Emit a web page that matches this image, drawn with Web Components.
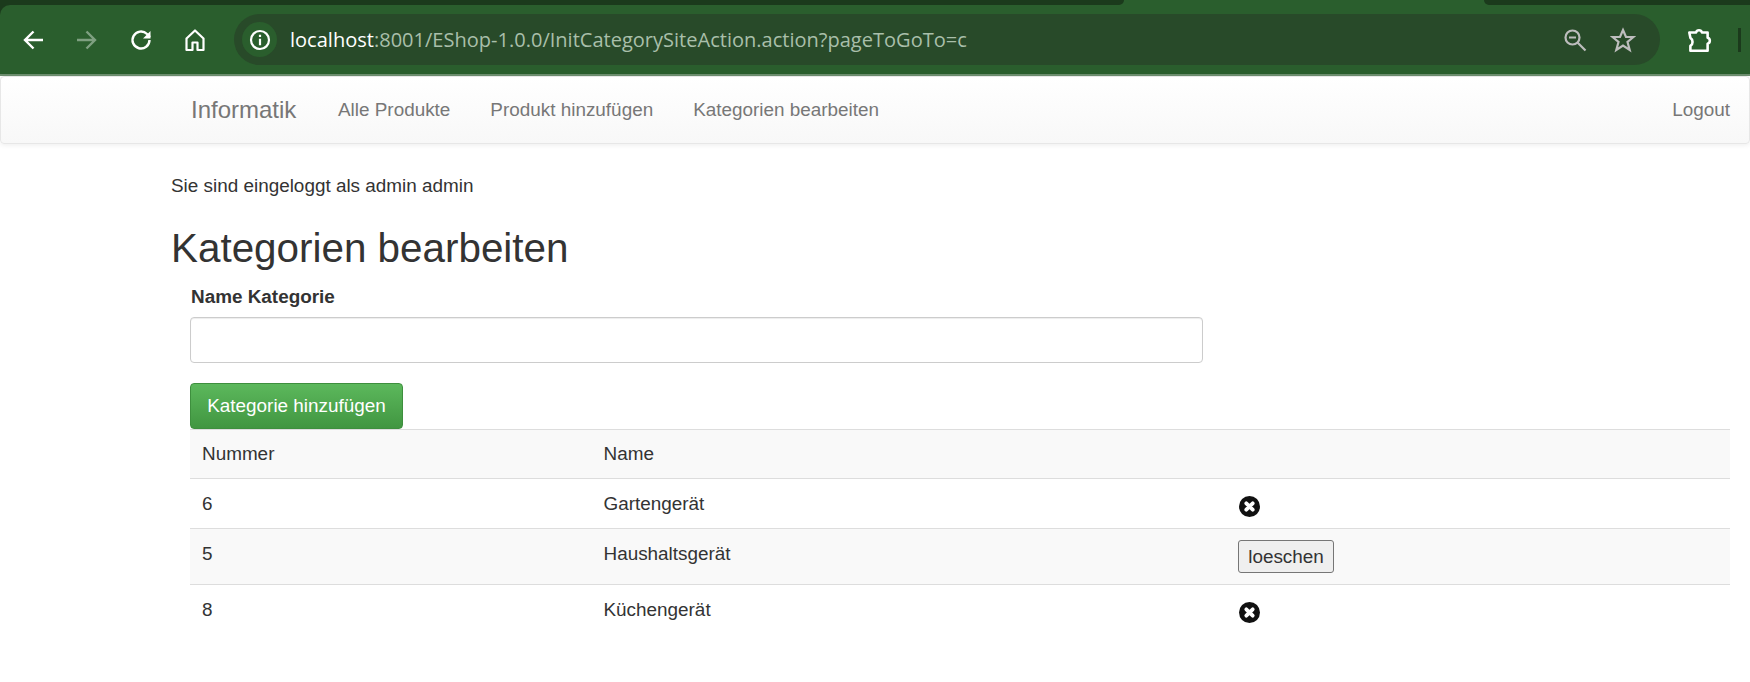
<!DOCTYPE html>
<html>
<head>
<meta charset="utf-8">
<title>Kategorien bearbeiten</title>
<style>
  html, body { margin: 0; padding: 0; background: #fff; }
  body { width: 1750px; height: 682px; overflow: hidden; font-family: "Liberation Sans", Arial, sans-serif; font-size: 18.9px; color: #333; }
</style>
</head>
<body>
<browser-bar url-host="localhost" url-rest=":8001/EShop-1.0.0/InitCategorySiteAction.action?pageToGoTo=c"></browser-bar>
<shop-nav></shop-nav>
<main-area>
  <login-note>Sie sind eingeloggt als admin admin</login-note>
  <page-title>Kategorien bearbeiten</page-title>
  <category-form></category-form>
  <category-table></category-table>
</main-area>

<script>
class BrowserBar extends HTMLElement {
  constructor() {
    super();
    this.attachShadow({ mode: 'open' });
  }
  connectedCallback() {
    const host = this.getAttribute('url-host');
    const rest = this.getAttribute('url-rest');
    this.shadowRoot.innerHTML = `
      <style>
        :host { display: block; height: 76px; background: #1b3a1c; }
        .strip { height: 5px; display: flex; background: #2a5e2d; }
        .strip div { background: #1b3a1c; }
        .strip .left { width: 1124px; border-radius: 0 0 5px 0; }
        .strip .right { margin-left: 360px; flex: 1; border-radius: 0 0 0 5px; }
        .bar { height: 71px; box-sizing: border-box; background: #2a5e2d; border-radius: 10px 0 0 0; display: flex; align-items: center; border-bottom: 2px solid #6e8f70; }
        .btn { width: 54px; height: 32px; display: flex; align-items: center; justify-content: center; flex: none; }
        .nav { display: flex; padding-left: 6px; margin-right: 12px; }
        svg { display: block; flex: none; }
        .omni { width: 1426px; height: 51px; flex: none; border-radius: 26px; background: #284a29; display: flex; align-items: center; box-sizing: border-box; padding: 0 24px 0 8px; }
        .info { width: 35px; height: 35px; border-radius: 18px; background: #2a5e2d; display: flex; align-items: center; justify-content: center; margin-right: 13px; flex: none; }
        .url { flex: 1; color: #a9bfaa; white-space: nowrap; font: 20.05px "Open Sans", sans-serif; }
        .url b { font-weight: 400; color: #fff; }
        .tail { display: flex; align-items: center; gap: 22px; }
        .ext { margin-left: 25px; }
        .sep { width: 3px; height: 24px; background: #1b3a1c; margin-left: 25px; }
      </style>
      <div class="strip"><div class="left"></div><div class="right"></div></div>
      <div class="bar">
        <div class="nav">
          <div class="btn"><svg width="24" height="24" viewBox="0 0 24 24" fill="none" stroke="#fff" stroke-width="2.4"><path d="M22 12H4.500M12.500 3.500L4 12l8.500 8.500"/></svg></div>
          <div class="btn"><svg width="24" height="24" viewBox="0 0 24 24" fill="none" stroke="#7fa081" stroke-width="2.4"><path d="M2 12h17.500M11.500 3.500L20 12l-8.500 8.500"/></svg></div>
          <div class="btn"><svg width="24" height="24" viewBox="0 0 24 24" fill="none" stroke="#fff" stroke-width="2.4"><path d="M20.500 12a8.500 8.500 0 1 1-2.500-6L21 9"/><path d="M21.500 3v7.500H14z" fill="#fff" stroke="none"/></svg></div>
          <div class="btn"><svg width="24" height="24" viewBox="0 0 24 24" fill="none" stroke="#fff" stroke-width="2.200"><path d="M3.500 10.500L12 2.500l8.500 8V22h-6v-7.500h-5V22h-6z" stroke-linejoin="round"/></svg></div>
        </div>
        <div class="omni">
          <div class="info"><svg width="24" height="24" viewBox="0 0 24 24"><circle cx="12" cy="12" r="9" fill="none" stroke="#fff" stroke-width="2.200"/><path d="M10.900 10.800h2.200v6.400h-2.200zM10.900 6.800h2.200v2.200h-2.200z" fill="#fff"/></svg></div>
          <div class="url"><b>${host}</b>${rest}</div>
          <div class="tail">
            <svg width="26" height="26" viewBox="0 0 26 26" fill="none" stroke="#bdbdbd" stroke-width="2.200"><circle cx="10.500" cy="10.500" r="7"/><path d="M7 10.500h7M15.500 15.500l8 8"/></svg>
            <svg width="26" height="26" viewBox="0 0 26 26" fill="none" stroke="#bdbdbd" stroke-width="2.200"><path d="M13 3l3 7h7.500l-6 5 2.200 8L13 18.600 6.300 23l2.200-8-6-5H10z"/></svg>
          </div>
        </div>
        <div class="ext"><svg width="28" height="28" viewBox="0 0 26 26" fill="none" stroke="#fff" stroke-width="2.400" stroke-linejoin="round"><path d="M4 6h6.300a2.800 2.800 0 0 1 5.400 0H21v5a2.800 2.800 0 0 1 0 5.400V23H5v-4.500a4.500 4.500 0 0 0 0-7.500z"/></svg></div>
        <div class="sep"></div>
      </div>
    `;
  }
}
customElements.define('browser-bar', BrowserBar);

class ShopNav extends HTMLElement {
  constructor() {
    super();
    this.attachShadow({ mode: 'open' });
  }
  connectedCallback() {
    this.shadowRoot.innerHTML = `
      <style>
        :host { display: block; height: 68px; box-sizing: border-box; background: linear-gradient(to bottom, #fff 0, #f8f8f8 100%); border: 1px solid #e7e7e7; border-radius: 4px; box-shadow: 0 1px 5px rgba(0,0,0,.075); font-size: 18.9px; color: #777; }
        nav { display: flex; align-items: center; height: 66px; padding: 0 19px 0 190px; }
        .brand { font-size: 24px; width: 107px; margin-right: 40px; white-space: nowrap; }
        a { margin-right: 40px; white-space: nowrap; }
        .logout { margin: 0 0 0 auto; }
      </style>
      <nav>
        <span class="brand">Informatik</span>
        <a>Alle Produkte</a>
        <a>Produkt hinzufügen</a>
        <a>Kategorien bearbeiten</a>
        <a class="logout">Logout</a>
      </nav>
    `;
  }
}
customElements.define('shop-nav', ShopNav);

class MainArea extends HTMLElement {
  constructor() {
    super();
    this.attachShadow({ mode: 'open' });
    this.shadowRoot.innerHTML = `
      <style>
        :host { display: block; padding: 30px 20px 0 171px; }
      </style>
      <slot></slot>
    `;
  }
}
customElements.define('main-area', MainArea);

class LoginNote extends HTMLElement {
  constructor() {
    super();
    this.attachShadow({ mode: 'open' });
    this.shadowRoot.innerHTML = `
      <style>
        :host { display: block; line-height: 23px; height: 23px; margin-bottom: 29px; }
      </style>
      <slot></slot>
    `;
  }
}
customElements.define('login-note', LoginNote);

class PageTitle extends HTMLElement {
  constructor() {
    super();
    this.attachShadow({ mode: 'open' });
    this.shadowRoot.innerHTML = `
      <style>
        :host { display: block; font-size: 40.4px; line-height: 44px; height: 44px; margin-bottom: 15px; }
      </style>
      <slot></slot>
    `;
  }
}
customElements.define('page-title', PageTitle);

class CategoryForm extends HTMLElement {
  constructor() {
    super();
    this.attachShadow({ mode: 'open' });
    this.shadowRoot.innerHTML = `
      <style>
        :host { display: block; padding-left: 19px; }
        label { display: block; font-weight: 700; line-height: 23px; margin: 0 0 9px 1px; }
        input { display: block; width: 1013px; height: 46px; box-sizing: border-box; border: 1px solid #ccc; border-radius: 4px; box-shadow: inset 0 1px 1px rgba(0,0,0,.075); margin-bottom: 20px; background: #fff; }
        button { display: block; height: 46px; width: 213px; box-sizing: border-box; color: #fff; font: 18.9px "Liberation Sans", Arial, sans-serif; background: linear-gradient(to bottom, #5cb85c 0, #419641 100%); border: 1px solid #3e8f3e; border-radius: 4px; padding: 0; }
      </style>
      <label>Name Kategorie</label>
      <input type="text">
      <button>Kategorie hinzufügen</button>
    `;
  }
}
customElements.define('category-form', CategoryForm);

class DeleteIcon extends HTMLElement {
  constructor() {
    super();
    this.attachShadow({ mode: 'open' });
    this.shadowRoot.innerHTML = `
      <style>
        :host { display: block; width: 21px; height: 21px; margin: 4px 0 0 1px; }
        svg { display: block; }
      </style>
      <svg width="21" height="21" viewBox="0 0 21 21"><circle cx="10.500" cy="10.500" r="10.500" fill="#111"/><path d="M7.300 7.300l6.400 6.400M13.700 7.300l-6.400 6.400" stroke="#fff" stroke-width="3.800" stroke-linecap="round"/></svg>
    `;
  }
}
customElements.define('delete-icon', DeleteIcon);

class CategoryTable extends HTMLElement {
  constructor() {
    super();
    this.attachShadow({ mode: 'open' });
  }
  connectedCallback() {
    const rows = [
      { id: 6, name: 'Gartengerät', action: '<delete-icon></delete-icon>' },
      { id: 5, name: 'Haushaltsgerät', action: '<button>loeschen</button>', tall: true },
      { id: 8, name: 'Küchengerät', action: '<delete-icon></delete-icon>' }
    ];
    let rowsHTML = '';
    rows.forEach(row => {
      rowsHTML += `
        <div class="row ${row.tall ? 'tall' : ''}">
          <div>${row.id}</div>
          <div>${row.name}</div>
          <div>${row.action}</div>
        </div>
      `;
    });
    this.shadowRoot.innerHTML = `
      <style>
        :host { display: block; margin-left: 19px; line-height: 23px; }
        .row { display: grid; grid-template-columns: 401.5px 634.5px 1fr; box-sizing: border-box; height: 50px; padding: 13px 12px 0; border-top: 1px solid #ddd; }
        .head { height: 49px; padding-top: 12px; }
        .tall { height: 56px; }
        .row:nth-of-type(odd) { background: #f9f9f9; }
        button { display: block; font: 18.9px "Liberation Sans", Arial, sans-serif; color: #333; height: 33px; width: 96px; padding: 0; background: #efefef; border: 1px solid #767676; border-radius: 3px; margin-top: -2px; }
      </style>
      <div class="row head"><div>Nummer</div><div>Name</div><div></div></div>
      ${rowsHTML}
    `;
  }
}
customElements.define('category-table', CategoryTable);
</script>
</body>
</html>
